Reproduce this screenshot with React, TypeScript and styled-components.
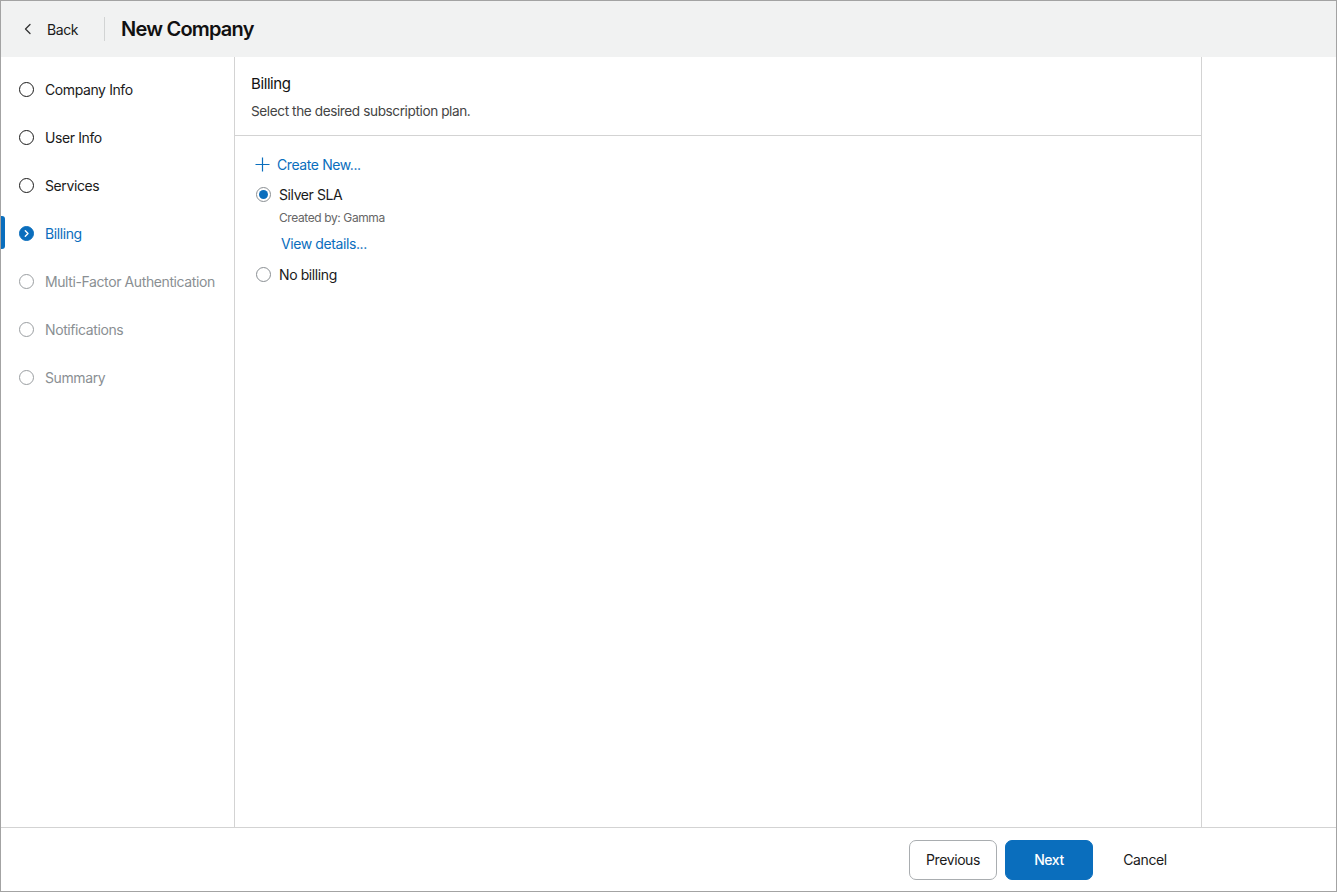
import React, { useState } from "react";
import styled, { createGlobalStyle, css } from "styled-components";

const Global = createGlobalStyle`
  html, body { margin: 0; padding: 0; height: 100%; }
  body { font-family: Inter, "Noto Sans", Arial, sans-serif; color: #1a1a1a; background: #fff; letter-spacing: -0.4px; }
  #root { height: 100%; }
  * { box-sizing: border-box; }
`;

const BLUE = "#0a6ebd";

const Frame = styled.div`
  width: 1337px;
  height: 892px;
  border: 1px solid #a3a3a3;
  display: flex;
  flex-direction: column;
  overflow: hidden;
`;

const Header = styled.header`
  height: 56px;
  flex: none;
  background: #f1f2f2;
  display: flex;
  align-items: center;
  padding-left: 20px;
`;

const BackButton = styled.button`
  display: flex;
  align-items: center;
  gap: 12px;
  border: none;
  background: none;
  padding: 0;
  font: inherit;
  letter-spacing: inherit;
  font-size: 14px;
  color: #1a1a1a;
  cursor: pointer;
  height: 24px;
`;

const Divider = styled.div`
  width: 1px;
  height: 24px;
  background: #d2d4d4;
  margin: 0 16px 0 26px;
`;

const Title = styled.h1`
  margin: 0;
  font-size: 20px;
  font-weight: 600;
  letter-spacing: -0.8px;
  color: #111;
`;

const Body = styled.div`
  flex: 1;
  display: flex;
  min-height: 0;
`;

const Sidebar = styled.nav`
  width: 234px;
  flex: none;
  border-right: 1px solid #d3d3d3;
  padding-top: 8px;
  display: flex;
  flex-direction: column;
`;

const StepRow = styled.div<{ $state: "done" | "active" | "todo" }>`
  position: relative;
  height: 48px;
  display: flex;
  align-items: center;
  gap: 11px;
  padding-left: 18px;
  font-size: 14px;
  color: ${(p) => (p.$state === "active" ? BLUE : p.$state === "todo" ? "#8a8f93" : "#1a1a1a")};
  ${(p) =>
    p.$state === "active" &&
    css`
      &::before {
        content: "";
        position: absolute;
        left: 0;
        top: 7px;
        width: 4px;
        height: 33px;
        background: ${BLUE};
        border-radius: 0 3px 3px 0;
      }
    `}
`;

const StepCircle = styled.span<{ $state: "done" | "active" | "todo" }>`
  width: 15px;
  height: 15px;
  flex: none;
  border-radius: 50%;
  display: flex;
  align-items: center;
  justify-content: center;
  border: 1.5px solid ${(p) => (p.$state === "todo" ? "#9a9ea1" : p.$state === "active" ? BLUE : "#1a1a1a")};
  background: ${(p) => (p.$state === "active" ? BLUE : "transparent")};
`;

const Main = styled.main`
  width: 967px;
  flex: none;
  border-right: 1px solid #d3d3d3;
  display: flex;
  flex-direction: column;
`;

const PanelHead = styled.div`
  padding: 16px 16px 16px;
  border-bottom: 1px solid #d3d3d3;
  height: 79px;
`;

const PanelTitle = styled.h2`
  margin: 0;
  font-size: 15px;
  font-weight: 400;
  color: #111;
  line-height: 22px;
`;

const PanelSub = styled.p`
  margin: 6px 0 0;
  font-size: 13.6px;
  color: #444;
  line-height: 20px;
`;

const PanelBody = styled.div`
  padding: 17px 20px;
  display: flex;
  flex-direction: column;
`;

const LinkButton = styled.button`
  display: flex;
  align-items: center;
  gap: 7px;
  border: none;
  background: none;
  padding: 0;
  font: inherit;
  letter-spacing: inherit;
  font-size: 14px;
  color: ${BLUE};
  cursor: pointer;
  height: 22px;
  align-self: flex-start;
`;

const RadioRow = styled.label<{ $gapTop: number }>`
  display: flex;
  align-items: center;
  gap: 8px;
  font-size: 14px;
  color: #1a1a1a;
  height: 22px;
  margin-top: ${(p) => p.$gapTop}px;
  cursor: pointer;
`;

const RadioDot = styled.span<{ $checked: boolean }>`
  width: 15px;
  height: 15px;
  border-radius: 50%;
  border: 1px solid #8a8f93;
  display: flex;
  align-items: center;
  justify-content: center;
  margin-left: 1px;
  &::after {
    content: "";
    width: 9px;
    height: 9px;
    border-radius: 50%;
    background: ${(p) => (p.$checked ? BLUE : "transparent")};
  }
`;

const Meta = styled.div`
  font-size: 12px;
  color: #666;
  padding-left: 24px;
  margin-top: 4px;
  line-height: 18px;
`;

const DetailsLink = styled.a`
  font-size: 14px;
  color: ${BLUE};
  padding-left: 26px;
  margin-top: 8px;
  line-height: 18px;
  text-decoration: none;
  cursor: pointer;
`;

const Aside = styled.div`
  flex: 1;
`;

const Footer = styled.footer`
  height: 64px;
  flex: none;
  border-top: 1px solid #d3d3d3;
  display: flex;
  align-items: center;
  justify-content: flex-end;
  gap: 8px;
  padding-right: 147px;
`;

const Btn = styled.button<{ $variant: "outline" | "primary" | "ghost" }>`
  width: 88px;
  height: 40px;
  border-radius: 7px;
  font: inherit;
  letter-spacing: inherit;
  font-size: 14px;
  cursor: pointer;
  ${(p) =>
    p.$variant === "primary"
      ? css`
          background: ${BLUE};
          color: #fff;
          border: 1px solid ${BLUE};
          font-weight: 500;
        `
      : p.$variant === "outline"
      ? css`
          background: #fff;
          color: #1a1a1a;
          border: 1px solid #a9adb0;
        `
      : css`
          background: transparent;
          color: #1a1a1a;
          border: 1px solid transparent;
        `}
`;

type StepState = "done" | "active" | "todo";
const steps: { label: string; state: StepState }[] = [
  { label: "Company Info", state: "done" },
  { label: "User Info", state: "done" },
  { label: "Services", state: "done" },
  { label: "Billing", state: "active" },
  { label: "Multi-Factor Authentication", state: "todo" },
  { label: "Notifications", state: "todo" },
  { label: "Summary", state: "todo" },
];

export default function App() {
  const [plan, setPlan] = useState("silver");
  return (
    <>
      <Global />
      <Frame>
        <Header>
          <BackButton>
            <svg width="14" height="14" viewBox="0 0 14 14" fill="none">
              <path d="M9 2.5 L4.5 7 L9 11.5" stroke="#333" strokeWidth="1.3" strokeLinecap="round" strokeLinejoin="round" />
            </svg>
            Back
          </BackButton>
          <Divider />
          <Title>New Company</Title>
        </Header>
        <Body>
          <Sidebar>
            {steps.map((s) => (
              <StepRow key={s.label} $state={s.state}>
                <StepCircle $state={s.state}>
                  {s.state === "active" && (
                    <svg width="9" height="9" viewBox="0 0 9 9" fill="none">
                      <path d="M3.3 1.8 L6 4.5 L3.3 7.2" stroke="#fff" strokeWidth="1.4" strokeLinecap="round" strokeLinejoin="round" />
                    </svg>
                  )}
                </StepCircle>
                {s.label}
              </StepRow>
            ))}
          </Sidebar>
          <Main>
            <PanelHead>
              <PanelTitle>Billing</PanelTitle>
              <PanelSub>Select the desired subscription plan.</PanelSub>
            </PanelHead>
            <PanelBody>
              <LinkButton>
                <svg width="15" height="15" viewBox="0 0 15 15" fill="none">
                  <path d="M7.5 0.5 V14.5 M0.5 7.5 H14.5" stroke={BLUE} strokeWidth="1.2" />
                </svg>
                Create New...
              </LinkButton>
              <RadioRow $gapTop={8} onClick={() => setPlan("silver")}>
                <RadioDot $checked={plan === "silver"} />
                Silver SLA
              </RadioRow>
              <Meta>Created by: Gamma</Meta>
              <DetailsLink>View details...</DetailsLink>
              <RadioRow $gapTop={10} onClick={() => setPlan("none")}>
                <RadioDot $checked={plan === "none"} />
                No billing
              </RadioRow>
            </PanelBody>
          </Main>
          <Aside />
        </Body>
        <Footer>
          <Btn $variant="outline">Previous</Btn>
          <Btn $variant="primary">Next</Btn>
          <Btn $variant="ghost">Cancel</Btn>
        </Footer>
      </Frame>
    </>
  );
}
